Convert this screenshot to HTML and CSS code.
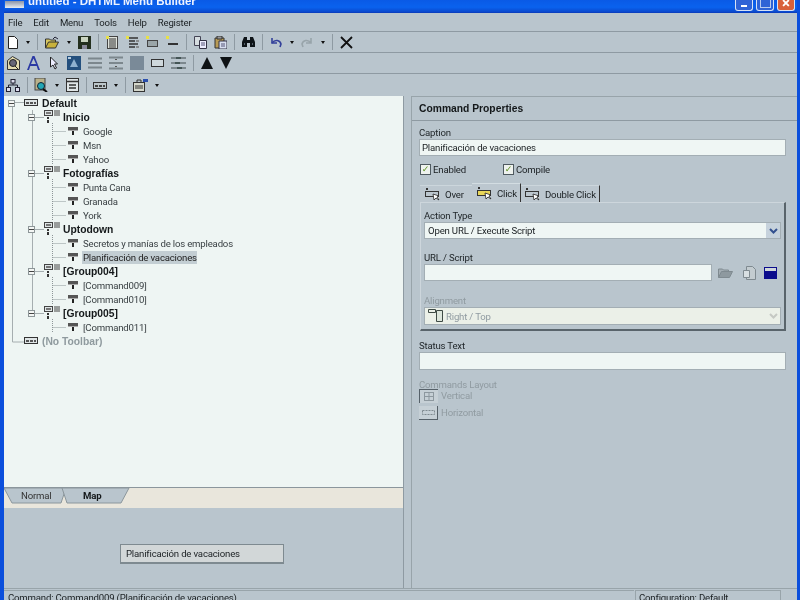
FILE: index.html
```html
<!DOCTYPE html>
<html lang="en">
<head>
    <meta charset="utf-8">
    <title>DHTML Menu Builder</title>
    <link rel="stylesheet" href="styles.css">
</head>
<body>
<svg class="defs" width="0" height="0">
    <symbol id="barIcon" viewBox="0 0 14 8"><rect x=".5" y=".5" width="13" height="6" fill="#dfe5e6" stroke="#333"/><path d="M2 3h3v2H2zM6 3h3v2H6zM10 3h2v2h-2z" fill="#555"/></symbol>
    <symbol id="groupIcon" viewBox="0 0 16 14"><rect x=".5" y=".5" width="8" height="5" fill="#dfe5e6" stroke="#444"/><path d="M2 2h5v2H2z" fill="#777"/><path d="M10 1h6M10 3h6M10 5h6" stroke="#444"/><path d="M3 7h2v2H3zM3 10h2v3H3z" fill="#333"/></symbol>
    <symbol id="cmdIcon" viewBox="0 0 10 10"><rect y="1" width="10" height="3" fill="#555"/><path d="M0 4h10v1H0z" fill="#aaa"/><path d="M4 5h2v4H4z" fill="#222"/></symbol>
    <symbol id="tabIcon" viewBox="0 0 16 14"><path d="M1 1h2v2H1z" fill="#333"/><rect x=".5" y="4.5" width="13" height="5" fill="none" stroke="#333"/><path d="M8 7l1 6 2-2 3 2-2-3 2-1z" fill="#fff" stroke="#222" stroke-width=".8"/></symbol>
    <symbol id="tabIconOn" viewBox="0 0 16 14"><path d="M1 1h2v2H1z" fill="#333"/><rect x=".5" y="4.5" width="13" height="5" fill="#e8d65a" stroke="#333"/><path d="M8 7l1 6 2-2 3 2-2-3 2-1z" fill="#fff" stroke="#222" stroke-width=".8"/></symbol>
</svg>
<div class="window">
    <div class="titlebar">
        <div class="appIcon"></div>
        <div class="titleText">untitled - DHTML Menu Builder</div>
        <div class="winButtons">
            <div class="winBtn"><span class="minGlyph"></span></div>
            <div class="winBtn"><span class="maxGlyph"></span></div>
            <div class="winBtn closeBtn">×</div>
        </div>
    </div>
    <div class="menubar">
        <span>File</span><span>Edit</span><span>Menu</span><span>Tools</span><span>Help</span><span>Register</span>
    </div>
    <div class="toolbar bar1">
        <svg width="10" height="13" viewBox="0 0 10 13"><path d="M.5.5h6l3 3v9H.5z" fill="#fff" stroke="#222"/></svg>
        <i class="drop"></i><b class="sep"></b>
        <svg width="14" height="13" viewBox="0 0 14 13"><path d="M.5 12V3h4l1 1h5v2" fill="#d8c860" stroke="#333"/><path d="M.5 12l3-6h10l-3 6z" fill="#c9b23c" stroke="#333"/><path d="M8 3l2-2 3 2" fill="none" stroke="#223"/></svg>
        <i class="drop"></i>
        <svg width="13" height="13" viewBox="0 0 13 13"><path d="M0 0h13v13H0z" fill="#24301f"/><path d="M3 1h7v5H3z" fill="#c9d4c0"/><path d="M4 9h5v4H4z" fill="#889"/></svg>
        <b class="sep"></b>
        <svg width="13" height="13" viewBox="0 0 13 13"><rect x="1.5" y=".5" width="10" height="12" fill="#dfe3dc" stroke="#444"/><path d="M3 3h7M3 5h7M3 7h7M3 9h7M3 11h7" stroke="#333"/><path d="M0 0h3v3H0z" fill="#e6e04a"/></svg>
        <svg width="13" height="13" viewBox="0 0 13 13"><path d="M0 0h3v3H0z" fill="#e6e04a"/><path d="M3 2h9M3 5h6M3 8h9M3 11h6" stroke="#333" stroke-width="1.6"/><path d="M10 5h3M10 11h3" stroke="#777" stroke-width="1.6"/></svg>
        <svg width="13" height="13" viewBox="0 0 13 13"><path d="M0 0h3v3H0z" fill="#e6e04a"/><rect x="1.5" y="4.5" width="10" height="6" fill="#9aa5a8" stroke="#444"/></svg>
        <svg width="13" height="13" viewBox="0 0 13 13"><path d="M0 0h3v3H0z" fill="#e6e04a"/><path d="M2 8h10" stroke="#333" stroke-width="2"/></svg>
        <b class="sep"></b>
        <svg width="13" height="13" viewBox="0 0 13 13"><path d="M.5.5h6v9h-6z" fill="#d6dde0" stroke="#445"/><path d="M5.5 4.5h7v8h-7z" fill="#eef" stroke="#334"/><path d="M7 7h4M7 9h4" stroke="#557"/></svg>
        <svg width="13" height="13" viewBox="0 0 13 13"><path d="M1 2h9v10H1z" fill="#b89b55" stroke="#333"/><path d="M3 0h5v3H3z" fill="#999" stroke="#333"/><path d="M5 5h8v8H5z" fill="#d8dff0" stroke="#334"/><path d="M7 8h4M7 10h4" stroke="#557"/></svg>
        <b class="sep"></b>
        <svg width="13" height="13" viewBox="0 0 13 13"><path d="M0 11V6l2-5h3v3h3V1h3l2 5v5H8V7H5v4z" fill="#0e1418"/><path d="M2 8h1M10 8h1" stroke="#9ab"/></svg>
        <b class="sep"></b>
        <svg width="12" height="11" viewBox="0 0 12 11"><path d="M2 1v5h5" fill="none" stroke="#33409a" stroke-width="1.6"/><path d="M2 6c3-4 8-3 9 1l-1 3" fill="none" stroke="#33409a" stroke-width="1.6"/></svg>
        <i class="drop"></i>
        <svg width="12" height="11" viewBox="0 0 12 11"><path d="M10 1v5H5M10 6C7 2 2 3 1 7l1 3" fill="none" stroke="#98a4aa" stroke-width="1.6"/></svg>
        <i class="drop"></i><b class="sep"></b>
        <svg width="13" height="13" viewBox="0 0 13 13"><path d="M1 1l11 11M12 1L1 12" stroke="#111" stroke-width="1.8"/></svg>
    </div>
    <div class="toolbar bar2">
        <svg width="13" height="14" viewBox="0 0 13 14"><path d="M.5 4.5l5-4 7 4v9h-12z" fill="#e4dcb0" stroke="#333"/><circle cx="6" cy="7" r="3.5" fill="#667" stroke="#222"/><path d="M8 10l3 3" stroke="#222"/></svg>
        <svg width="13" height="14" viewBox="0 0 13 14"><path d="M0 14L5.500 0h2L13 14h-2L9.700 10H3.300L2 14zM4 8h5L6.500 2.500z" fill="#2c3aa4"/></svg>
        <svg width="13" height="14" viewBox="0 0 13 14"><path d="M3.500 1v10l2.500-2 2 4 1.500-1-2-4h3z" fill="#eef" stroke="#222"/></svg>
        <svg width="14" height="14" viewBox="0 0 14 14"><rect width="14" height="14" fill="#24507e"/><path d="M7 3l4 8H3z" fill="#8fb1cf"/><path d="M1 1h3v2H1z" fill="#b7cde0"/></svg>
        <svg width="14" height="12" viewBox="0 0 14 12"><path d="M0 1.500h14M0 6h14M0 10.500h14" stroke="#7c878d" stroke-width="2"/></svg>
        <svg width="14" height="14" viewBox="0 0 14 14"><path d="M0 1.500h14M0 7h14M0 12.500h14" stroke="#7c878d" stroke-width="2"/><path d="M7 3v1M7 10v1" stroke="#555" stroke-width="2"/></svg>
        <svg width="14" height="14" viewBox="0 0 14 14"><rect width="14" height="14" fill="#7a8a98"/></svg>
        <svg width="13" height="8" viewBox="0 0 13 8"><rect x=".5" y=".5" width="12" height="7" fill="#cfd8dc" stroke="#333"/></svg>
        <svg width="15" height="14" viewBox="0 0 15 14"><path d="M0 2h5M10 2h5M0 7h4M9 7h6M0 12h6M11 12h4" stroke="#7c878d" stroke-width="2"/><path d="M5 2h5M4 7h5M6 12h5" stroke="#455" stroke-width="2"/></svg>
        <b class="sep"></b>
        <svg width="12" height="12" viewBox="0 0 12 12"><path d="M6 0l6 12H0z" fill="#0e1214"/></svg>
        <svg width="12" height="12" viewBox="0 0 12 12"><path d="M0 0h12L6 12z" fill="#0e1214"/></svg>
    </div>
    <div class="toolbar bar3">
        <svg width="14" height="13" viewBox="0 0 14 13"><rect x="5" y=".5" width="4" height="3.500" fill="#dde" stroke="#223"/><rect x=".5" y="8.500" width="4" height="4" fill="#dde" stroke="#223"/><rect x="9.500" y="8.500" width="4" height="4" fill="#dde" stroke="#223"/><path d="M7 4v2M2.500 8V6h9v2" fill="none" stroke="#223"/></svg>
        <b class="sep"></b>
        <svg width="14" height="14" viewBox="0 0 14 14"><rect x="1" width="10" height="12" fill="#b9b18a" stroke="#444"/><circle cx="7" cy="8" r="3.500" fill="#23a7b5" stroke="#123"/><path d="M9 11l4 3" stroke="#111" stroke-width="2"/></svg>
        <i class="drop"></i>
        <svg width="13" height="14" viewBox="0 0 13 14"><rect x=".5" y=".5" width="12" height="13" fill="#dfe5e6" stroke="#333"/><path d="M1 3.500h11M3 7h7M3 10h7" stroke="#333" stroke-width="1.400"/></svg>
        <b class="sep"></b>
        <svg width="14" height="7" viewBox="0 0 14 7"><rect x=".5" y=".5" width="13" height="6" fill="#bcc6ca" stroke="#333"/><path d="M2 3h3v2H2zM6 3h3v2H6zM10 3h2v2h-2z" fill="#444"/></svg>
        <i class="drop"></i><b class="sep"></b>
        <svg width="15" height="14" viewBox="0 0 15 14"><rect x=".5" y="4.500" width="11" height="9" fill="#d5d8cc" stroke="#333"/><path d="M2 8h8M2 10h8M4 4V2h4v2" fill="none" stroke="#333"/><path d="M10 1h5v3h-5z" fill="#2a4fae"/></svg>
        <i class="drop"></i>
    </div>
    <div class="main">
        <div class="leftPane">
            <div class="tree">
                <svg class="treeLines" width="100" height="260" viewBox="0 0 100 260">
                    <path d="M8.500 11V246H20M8.500 6.500H20M28.500 14V217M28.500 21.500H40M28.500 77.500H40M28.500 133.500H40M28.500 175.500H40M28.500 217.500H40" fill="none" stroke="#a6aeb0"/>
                    <path d="M48.500 27v42M48.500 35.500H62M48.500 49.500H62M48.500 63.500H62M48.500 83v42M48.500 91.500H62M48.500 105.500H62M48.500 119.500H62M48.500 139v28M48.500 147.500H62M48.500 161.500H62M48.500 181v28M48.500 189.500H62M48.500 203.500H62M48.500 223v14M48.500 231.500H62" fill="none" stroke="#8d9698" stroke-dasharray="1 1"/>
                </svg>
                <div class="row rowRoot"><span class="box"></span><svg class="rootIcon"><use href="#barIcon"/></svg><span class="bold">Default</span></div>
                <div class="row rowGroup"><span class="box"></span><svg class="groupIcon"><use href="#groupIcon"/></svg><span class="bold">Inicio</span></div>
                <div class="row rowCmd"><svg class="cmdIcon"><use href="#cmdIcon"/></svg><span>Google</span></div>
                <div class="row rowCmd"><svg class="cmdIcon"><use href="#cmdIcon"/></svg><span>Msn</span></div>
                <div class="row rowCmd"><svg class="cmdIcon"><use href="#cmdIcon"/></svg><span>Yahoo</span></div>
                <div class="row rowGroup"><span class="box"></span><svg class="groupIcon"><use href="#groupIcon"/></svg><span class="bold">Fotografías</span></div>
                <div class="row rowCmd"><svg class="cmdIcon"><use href="#cmdIcon"/></svg><span>Punta Cana</span></div>
                <div class="row rowCmd"><svg class="cmdIcon"><use href="#cmdIcon"/></svg><span>Granada</span></div>
                <div class="row rowCmd"><svg class="cmdIcon"><use href="#cmdIcon"/></svg><span>York</span></div>
                <div class="row rowGroup"><span class="box"></span><svg class="groupIcon"><use href="#groupIcon"/></svg><span class="bold">Uptodown</span></div>
                <div class="row rowCmd"><svg class="cmdIcon"><use href="#cmdIcon"/></svg><span>Secretos y manías de los empleados</span></div>
                <div class="row rowCmd"><svg class="cmdIcon"><use href="#cmdIcon"/></svg><span class="selected">Planificación de vacaciones</span></div>
                <div class="row rowGroup"><span class="box"></span><svg class="groupIcon"><use href="#groupIcon"/></svg><span class="bold">[Group004]</span></div>
                <div class="row rowCmd"><svg class="cmdIcon"><use href="#cmdIcon"/></svg><span>[Command009]</span></div>
                <div class="row rowCmd"><svg class="cmdIcon"><use href="#cmdIcon"/></svg><span>[Command010]</span></div>
                <div class="row rowGroup"><span class="box"></span><svg class="groupIcon"><use href="#groupIcon"/></svg><span class="bold">[Group005]</span></div>
                <div class="row rowCmd"><svg class="cmdIcon"><use href="#cmdIcon"/></svg><span>[Command011]</span></div>
                <div class="row rowNone"><svg class="rootIcon"><use href="#barIcon"/></svg><span class="bold muted">(No Toolbar)</span></div>
            </div>
            <div class="tabStrip">
                <svg class="tabShapes" width="130" height="21" viewBox="0 0 130 21">
                    <path d="M0 0L8 15H57L62 0z" fill="#b9c5cd" stroke="#8b969c"/>
                    <path d="M58 0L63 15H117L125 0z" fill="#b9c5cd" stroke="#8b969c"/>
                </svg>
                <span class="tabNormal">Normal</span>
                <span class="tabMap">Map</span>
            </div>
            <div class="mapPane">
                <div class="mapBox">Planificación de vacaciones</div>
            </div>
        </div>
        <div class="rightPane">
            <div class="paneHead">Command Properties</div>
            <div class="paneBody">
                <label class="fieldLabel">Caption</label>
                <div class="input">Planificación de vacaciones</div>
                <div class="checks">
                    <div class="check checkFirst"><span class="tick">✓</span>Enabled</div>
                    <div class="check"><span class="tick">✓</span>Compile</div>
                </div>
                <div class="tabs">
                    <div class="tab tabOver"><svg class="tabIcon"><use href="#tabIcon"/></svg>Over</div>
                    <div class="tab tabOn"><svg class="tabIcon"><use href="#tabIconOn"/></svg>Click</div>
                    <div class="tab tabEdge"><svg class="tabIcon"><use href="#tabIcon"/></svg>Double Click</div>
                </div>
                <div class="tabBody">
                    <label class="fieldLabel">Action Type</label>
                    <div class="select">Open URL / Execute Script<span class="selectBtn"><svg width="9" height="6" viewBox="0 0 9 6"><path d="M1 1l3.500 3.500L8 1" fill="none" stroke="#33518f" stroke-width="2"/></svg></span></div>
                    <label class="fieldLabel urlLabel">URL / Script</label>
                    <div class="urlRow">
                        <div class="input urlInput"></div>
                        <svg width="15" height="11" viewBox="0 0 15 11"><path d="M.5 10.500V2h4l1 1h5v2" fill="#a3adb3" stroke="#7f8a90"/><path d="M.5 10.500l3-6h11l-3 6z" fill="#8e999f" stroke="#7f8a90"/></svg>
                        <svg class="urlDoc" width="13" height="14" viewBox="0 0 13 14"><path d="M3.500.5h6l3 3v10h-9z" fill="#c3ccd0" stroke="#7f8a90"/><path d="M.5 4.500h6v7h-6z" fill="#d8dfe2" stroke="#7f8a90"/></svg>
                        <svg class="urlWin" width="13" height="12" viewBox="0 0 13 12"><rect width="13" height="12" fill="#0b0c8c"/><rect x="1" y="1" width="11" height="3" fill="#cfd6da"/></svg>
                    </div>
                    <label class="fieldLabel dim alignLabel">Alignment</label>
                    <div class="select selectOff"><svg class="alignIcon" width="15" height="14" viewBox="0 0 15 14"><path d="M.5.500h7v3h-7z" fill="none" stroke="#3e4a44"/><path d="M8.500 1.500h6v11h-6z" fill="#dde6dc" stroke="#3e4a44"/></svg>Right / Top<span class="selectBtn"><svg width="9" height="6" viewBox="0 0 9 6"><path d="M1 1l3.500 3.500L8 1" fill="none" stroke="#c5c9c4" stroke-width="2"/></svg></span></div>
                </div>
                <label class="fieldLabel statusLabel">Status Text</label>
                <div class="input statusInput"></div>
                <label class="fieldLabel dim layoutLabel">Commands Layout</label>
                <div class="layoutBtn"><span class="layoutIcon layoutPressed"><svg width="10" height="9" viewBox="0 0 10 9"><rect x=".5" y=".5" width="9" height="8" fill="none" stroke="#8d989f"/><path d="M1 4.500h8M5 1v7" stroke="#8d989f"/></svg></span>Vertical</div>
                <div class="layoutBtn"><span class="layoutIcon layoutRaised"><svg width="13" height="5" viewBox="0 0 13 5"><rect x=".5" y=".5" width="12" height="4" fill="none" stroke="#7f8a90" stroke-dasharray="2 1"/></svg></span>Horizontal</div>
            </div>
        </div>
    </div>
    <div class="statusbar">
        <div class="statusMain">Command: Command009 (Planificación de vacaciones)</div>
        <div class="statusConfig">Configuration: Default</div>
    </div>
</div>
</body>
</html>
```

FILE: styles.css
```css
html, body{
    margin: 0;
    padding: 0;
    width: 800px;
    height: 600px;
    overflow: hidden;
    background: #b9c5cd;
}
.defs{
    position: absolute;
}
.window{
    width: 800px;
    height: 600px;
    box-sizing: border-box;
    border-left: 4px solid #0b4fdc;
    border-right: 3px solid #0b4fdc;
    background: #b9c5cd;
    color: #1a1f22;
    font-family: Roboto, "Liberation Sans", sans-serif;
    font-size: 9.6px;
    letter-spacing: -0.18px;
    display: flex;
    flex-direction: column;
    overflow: hidden;
    filter: blur(0.35px);
}
.titlebar{
    height: 13px;
    flex: none;
    margin: 0 -3px 0 -4px;
    background: linear-gradient(#0a5ae6, #0a62ee 60%, #0a48cc);
    display: flex;
    align-items: flex-end;
    overflow: hidden;
    border-bottom: 1px solid #0a3fc0;
    box-sizing: border-box;
}
.appIcon{
    width: 19px;
    height: 7px;
    margin: 0 4px 4px 5px;
    background: linear-gradient(#8a93a8, #e8ecf0);
    flex: none;
}
.titleText{
    color: #eef3ff;
    font-family: "Liberation Sans", sans-serif;
    font-size: 11.5px;
    font-weight: bold;
    letter-spacing: 0;
    line-height: 13px;
    margin-bottom: 4px;
    white-space: nowrap;
}
.winButtons{
    margin-left: auto;
    margin-right: 5px;
    display: flex;
    gap: 3px;
    align-self: flex-start;
}
.winBtn{
    width: 18px;
    height: 11px;
    box-sizing: border-box;
    border: 1px solid #d7e2f5;
    border-top: none;
    border-radius: 0 0 3px 3px;
    background: #2f63d6;
    color: #fff;
    display: flex;
    justify-content: center;
}
.minGlyph{
    width: 6px;
    height: 2px;
    background: #fff;
    margin-top: 5px;
}
.maxGlyph{
    width: 9px;
    height: 7px;
    border: 1px solid #b8cbf0;
    border-top: none;
}
.closeBtn{
    background: #d9603a;
    font-size: 15px;
    font-weight: bold;
    line-height: 7px;
}
.menubar{
    height: 19px;
    flex: none;
    box-sizing: border-box;
    border-bottom: 1px solid #8e9aa2;
    display: flex;
    align-items: center;
    gap: 11px;
    padding-left: 4px;
}
.toolbar{
    height: 21px;
    flex: none;
    box-sizing: border-box;
    border-bottom: 1px solid #8e9aa2;
    display: flex;
    align-items: center;
    gap: 7px;
}
.toolbar svg{
    flex: none;
}
.bar1{
    padding-left: 4px;
}
.bar2{
    padding-left: 3px;
}
.bar3{
    padding-left: 2px;
    gap: 6.5px;
    height: 22px;
    border-bottom: none;
}
.sep{
    width: 1px;
    height: 16px;
    background: #8e9aa2;
    flex: none;
}
.drop{
    width: 0;
    height: 0;
    margin: 0 0.5px;
    border-left: 2.5px solid transparent;
    border-right: 2.5px solid transparent;
    border-top: 3px solid #111;
    flex: none;
}
.main{
    height: 492px;
    flex: none;
    display: flex;
}
.leftPane{
    width: 399px;
    flex: none;
    display: flex;
    flex-direction: column;
    border-right: 1px solid #8e9aa2;
    box-sizing: content-box;
}
.tree{
    flex: 1;
    background: #eef5f3;
    position: relative;
}
.treeLines{
    position: absolute;
    left: 0;
    top: 0;
}
.row{
    height: 14px;
    display: flex;
    align-items: center;
    position: relative;
    white-space: nowrap;
}
.rowRoot{
    padding-left: 4px;
}
.rowGroup{
    padding-left: 24px;
}
.rowCmd{
    padding-left: 64px;
}
.rowNone{
    padding-left: 20px;
}
.box{
    width: 7px;
    height: 7px;
    box-sizing: border-box;
    border: 1px solid #8d9698;
    background: linear-gradient(transparent 2px, #444 2px, #444 3px, transparent 3px) #f4f6f4;
    flex: none;
}
.rootIcon{
    width: 14px;
    height: 8px;
    margin: 0 4px 0 9px;
    flex: none;
}
.rowNone .rootIcon{
    margin-left: 0;
}
.groupIcon{
    width: 16px;
    height: 14px;
    margin: 0 3px 0 9px;
    flex: none;
}
.cmdIcon{
    width: 10px;
    height: 10px;
    margin-right: 5px;
    flex: none;
}
.bold{
    font-family: "Liberation Sans", sans-serif;
    font-weight: bold;
    font-size: 10.3px;
    letter-spacing: 0;
    color: #14181a;
}
.muted{
    color: #8f9a9e;
}
.rowCmd span{
    color: #3a4144;
}
.selected{
    background: #c3ced3;
    padding: 1px 0;
    margin-left: -1px;
    padding-left: 1px;
    color: #222 !important;
}
.tabStrip{
    height: 21px;
    flex: none;
    background: #e9e6dc;
    border-top: 1px solid #8b969c;
    position: relative;
    display: flex;
    align-items: flex-start;
    box-sizing: border-box;
}
.tabShapes{
    position: absolute;
    left: 0;
    top: 0;
}
.tabNormal{
    position: relative;
    margin: 2px 0 0 17px;
    width: 62px;
    color: #333;
}
.tabMap{
    position: relative;
    margin-top: 2px;
    font-weight: bold;
    color: #14181a;
}
.mapPane{
    height: 80px;
    flex: none;
    padding: 36px 0 0 116px;
    box-sizing: border-box;
}
.mapBox{
    width: 164px;
    height: 20px;
    box-sizing: border-box;
    background: #d2d7d8;
    border: 1px solid #7e8a90;
    border-bottom-width: 2px;
    padding-left: 5px;
    line-height: 18px;
}
.rightPane{
    width: 386px;
    margin-left: 7px;
    flex: none;
    border-left: 1px solid #98a4aa;
    border-top: 1px solid #98a4aa;
    box-sizing: border-box;
    display: flex;
    flex-direction: column;
}
.paneHead{
    height: 24px;
    flex: none;
    box-sizing: border-box;
    border-bottom: 1px solid #8e9aa2;
    padding-left: 7px;
    font-family: "Liberation Sans", sans-serif;
    font-weight: bold;
    font-size: 10.3px;
    letter-spacing: 0;
    line-height: 23px;
    color: #14181a;
}
.paneBody{
    padding: 5px 11px 0 7px;
}
.fieldLabel{
    display: block;
    height: 13px;
    line-height: 13px;
    color: #22282b;
}
.dim{
    color: #909ba1;
}
.input{
    height: 17px;
    box-sizing: border-box;
    border: 1px solid #a3aeb4;
    background: #eff6f4;
    line-height: 15px;
    padding-left: 2px;
}
.checks{
    display: flex;
    margin-top: 6px;
    height: 14px;
    align-items: center;
}
.check{
    display: flex;
    align-items: center;
    margin-left: 1px;
}
.checkFirst{
    width: 82px;
}
.tick{
    width: 11px;
    height: 11px;
    box-sizing: border-box;
    border: 1px solid #4f5a60;
    background: #eef2ee;
    color: #5a8f1e;
    font-family: "DejaVu Sans", sans-serif;
    font-size: 9px;
    font-weight: bold;
    line-height: 9px;
    text-align: center;
    margin-right: 2px;
}
.tabs{
    display: flex;
    align-items: flex-end;
    margin: 7px 0 0 1px;
    height: 19px;
}
.tab{
    display: flex;
    align-items: center;
    height: 17px;
    box-sizing: border-box;
    gap: 4px;
    background: #bcc7cf;
    white-space: nowrap;
}
.tabOver{
    width: 52px;
    padding-left: 5px;
    border-top: 1px solid #ccd6dc;
}
.tabOn{
    width: 49px;
    height: 19px;
    padding-left: 5px;
    border-right: 1px solid #333;
    border-top: 1px solid #d3dde2;
}
.tabEdge{
    width: 79px;
    padding-left: 4px;
    border-right: 1px solid #333;
    border-top: 1px solid #ccd6dc;
}
.tabIcon{
    width: 16px;
    height: 14px;
    flex: none;
}
.tabBody{
    margin-left: 1px;
    height: 129px;
    box-sizing: border-box;
    padding: 6px 3px 0 3px;
    border-top: 1px solid #cdd6dc;
    border-left: 1px solid #cdd6dc;
    border-right: 2px solid #59646b;
    border-bottom: 2px solid #59646b;
}
.select{
    height: 17px;
    box-sizing: border-box;
    border: 1px solid #a3aeb4;
    background: #eff6f4;
    line-height: 15px;
    padding-left: 3px;
    display: flex;
    align-items: center;
    position: relative;
}
.selectBtn{
    margin-left: auto;
    width: 14px;
    height: 15px;
    background: #c6d2dc;
    display: flex;
    align-items: center;
    justify-content: center;
}
.urlLabel{
    margin-top: 12px;
}
.urlRow{
    display: flex;
    align-items: center;
}
.urlInput{
    width: 288px;
    flex: none;
    margin-right: 6px;
}
.urlDoc{
    margin-left: 10px;
}
.urlWin{
    margin-left: 8px;
}
.alignLabel{
    margin-top: 13px;
}
.selectOff{
    color: #909ba1;
    background: #ebf0e8;
    height: 18px;
}
.selectOff .selectBtn{
    background: none;
}
.alignIcon{
    margin-right: 3px;
    flex: none;
}
.statusLabel{
    margin-top: 8px;
}
.statusInput{
    height: 18px;
}
.layoutLabel{
    margin: 8px 0 -3px;
}
.layoutBtn{
    display: flex;
    align-items: center;
    gap: 3px;
    height: 15px;
    margin-bottom: 2px;
    color: #909ba1;
}
.layoutIcon{
    width: 19px;
    height: 14px;
    box-sizing: border-box;
    background: #c6d0d6;
    display: flex;
    align-items: center;
    justify-content: center;
}
.layoutPressed{
    border-top: 1px solid #566169;
    border-left: 1px solid #566169;
}
.layoutRaised{
    border-bottom: 1px solid #566169;
    border-right: 1px solid #566169;
}
.statusbar{
    flex: 1;
    display: flex;
    padding-top: 1px;
    border-top: 1px solid #98a4aa;
    white-space: nowrap;
    overflow: hidden;
}
.statusMain{
    width: 630px;
    flex: none;
    padding: 1px 0 0 4px;
    box-sizing: border-box;
    border-top: 1px solid #98a4aa;
}
.statusConfig{
    width: 146px;
    margin-left: 1px;
    padding: 1px 0 0 3px;
    box-sizing: border-box;
    border: 1px solid #98a4aa;
    border-bottom: none;
}
```
